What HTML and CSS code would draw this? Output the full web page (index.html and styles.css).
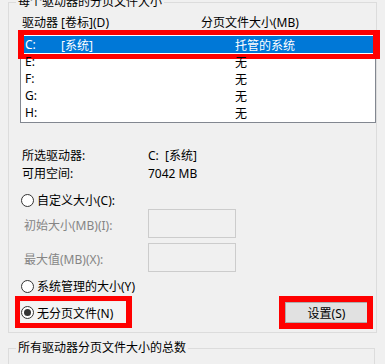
FILE: index.html
```html
<!DOCTYPE html>
<html lang="zh-CN">
<head>
    <meta charset="UTF-8">
    <title>虚拟内存</title>
    <link rel="stylesheet" href="styles.css">
</head>
<body>
    <fieldset class="group">
        <legend>每个驱动器的分页文件大小</legend>

        <div class="list-head">
            <span class="head-drive">驱动器 [卷标](D)</span>
            <span>分页文件大小(MB)</span>
        </div>

        <div class="list-box">
            <div class="row selected">
                <span class="col-drive">C:</span>
                <span class="col-label">[系统]</span>
                <span>托管的系统</span>
                <div class="mark"></div>
            </div>
            <div class="row">
                <span class="col-drive">E:</span>
                <span class="col-label"></span>
                <span>无</span>
            </div>
            <div class="row">
                <span class="col-drive">F:</span>
                <span class="col-label"></span>
                <span>无</span>
            </div>
            <div class="row">
                <span class="col-drive">G:</span>
                <span class="col-label"></span>
                <span>无</span>
            </div>
            <div class="row">
                <span class="col-drive">H:</span>
                <span class="col-label"></span>
                <span>无</span>
            </div>
        </div>

        <div class="info first">
            <span class="info-name">所选驱动器:</span>
            <span>C:&nbsp;&nbsp;[系统]</span>
        </div>
        <div class="info">
            <span class="info-name">可用空间:</span>
            <span>7042 MB</span>
        </div>

        <label class="radio custom">
            <span class="dot"></span>
            <span>自定义大小(C):</span>
        </label>
        <div class="field">
            <span class="field-name">初始大小(MB)(I):</span>
            <span class="input"></span>
        </div>
        <div class="field">
            <span class="field-name">最大值(MB)(X):</span>
            <span class="input"></span>
        </div>

        <label class="radio managed">
            <span class="dot"></span>
            <span>系统管理的大小(Y)</span>
        </label>

        <div class="bottom-row">
            <label class="radio none">
                <span class="dot checked"></span>
                <span>无分页文件(N)</span>
                <div class="mark"></div>
            </label>
            <button class="set-button">设置(S)<div class="mark"></div></button>
        </div>
    </fieldset>

    <fieldset class="group total">
        <legend>所有驱动器分页文件大小的总数</legend>
    </fieldset>
</body>
</html>
```

FILE: styles.css
```css
body {
    margin: 0;
    width: 385px;
    height: 364px;
    overflow: hidden;
    background-color: #f0f0f0;
    font-family: 'Noto Sans', 'Noto Sans CJK SC', sans-serif;
    font-size: 12px;
    color: #000;
}
.group {
    margin: -4px 0 0 8px;
    padding: 0 0 9px 0;
    width: 367px;
    border: 1px solid #dcdcdc;
    box-sizing: border-box;
}
.group legend {
    margin-left: 7px;
    padding: 0 2px;
    line-height: 12px;
}
.list-head {
    display: flex;
    margin: 8px 0 0 13px;
    line-height: 14px;
}
.head-drive {
    width: 179px;
}
.list-box {
    margin: 5px 0 0 11px;
    width: 356px;
    padding: 0 2px 1px 3px;
    border: 1px solid #828790;
    border-top-color: #ffffff;
    background-color: #ffffff;
    box-sizing: border-box;
}
.row {
    position: relative;
    display: flex;
    align-items: center;
    height: 17px;
    padding-left: 1px;
}
.row.selected {
    background-color: #0078d7;
    color: #ffffff;
}
.col-drive {
    width: 36px;
}
.col-label {
    width: 174px;
}
.mark {
    position: absolute;
    top: -6px;
    bottom: -6px;
    left: -6px;
    right: -7px;
    border: 5px solid #ff0000;
    border-left-width: 6px;
    border-right-width: 7px;
    pointer-events: none;
}
.info {
    display: flex;
    height: 18px;
    align-items: center;
    margin-left: 13px;
}
.info.first {
    margin-top: 23px;
}
.info-name {
    width: 126px;
}
.radio {
    position: relative;
    display: flex;
    align-items: center;
    gap: 3px;
    height: 18px;
    margin-left: 12px;
}
.dot {
    position: relative;
    width: 11px;
    height: 11px;
    border: 1px solid #333333;
    border-radius: 50%;
    background-color: #ffffff;
}
.dot.checked::after {
    content: '';
    position: absolute;
    top: 2px;
    left: 2px;
    width: 7px;
    height: 7px;
    border-radius: 50%;
    background-color: #333333;
}
.custom {
    margin-top: 9px;
}
.field {
    display: flex;
    align-items: center;
    height: 29px;
    margin: 0 0 5px 15px;
}
.field-name {
    width: 124px;
    padding-top: 3px;
    color: #858585;
}
.input {
    width: 88px;
    height: 29px;
    border: 1px solid #cccccc;
    box-sizing: border-box;
}
.managed {
    margin-top: 4px;
}
.bottom-row {
    display: flex;
    align-items: center;
    justify-content: space-between;
    height: 21px;
    margin: 7px 8px 0 0;
}
.radio.none {
    height: 21px;
    width: 105px;
    background-color: #f4f4f4;
}
.radio.none .mark {
    top: -6px;
    bottom: -5px;
    left: -6px;
    right: -6px;
    border-width: 5px;
    border-right-width: 6px;
}
.set-button {
    position: relative;
    width: 83px;
    height: 21px;
    padding: 0;
    border: 1px solid #adadad;
    background-color: #e1e1e1;
    font-family: 'Noto Sans', 'Noto Sans CJK SC', sans-serif;
    font-size: 12px;
    color: #000;
}
.set-button .mark {
    top: -7px;
    bottom: -7px;
    left: -7px;
    right: -6px;
    border-width: 6px;
}
.total {
    margin-top: 9px;
    height: 40px;
    padding: 0;
}
```
